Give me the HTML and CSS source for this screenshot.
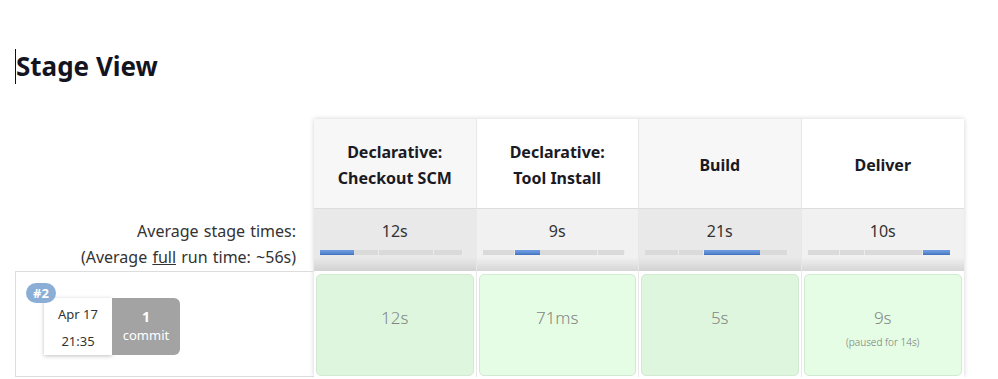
FILE: index.html
```html
<!DOCTYPE html>
<html lang="en">
  <head>
    <meta charset="UTF-8" />
    <meta name="viewport" content="width=device-width, initial-scale=1.0" />
    <title>Stage View</title>
    <link rel="stylesheet" href="styles.css">
  </head>

  <body>
    <h2 class="page-title">Stage View</h2>

    <div class="stage-view">
      <div class="labels">
        <div class="label-head"></div>
        <div class="label-avg">
          Average stage times:<br />
          (Average <u>full</u> run time: ~56s)
        </div>
        <div class="label-build">
          <span class="badge">#2</span>
          <div class="build-info">
            <div class="build-date">
              <span>Apr 17</span>
              <span>21:35</span>
            </div>
            <div class="build-commits">
              <strong>1</strong>
              <span>commit</span>
            </div>
          </div>
        </div>
      </div>

      <div class="stages">
        <!-- header row -->
        <div class="stage-head odd">Declarative:<br />Checkout SCM</div>
        <div class="stage-head">Declarative:<br />Tool Install</div>
        <div class="stage-head odd">Build</div>
        <div class="stage-head last">Deliver</div>

        <!-- average row -->
        <div class="stage-avg odd">
          <div class="avg-time">12s</div>
          <div class="bar">
            <i class="active" style="width: 24%"></i><i style="width: 17%"></i><i style="width: 39%"></i><i style="width: 20%"></i>
          </div>
        </div>
        <div class="stage-avg">
          <div class="avg-time">9s</div>
          <div class="bar">
            <i style="width: 23%"></i><i class="active" style="width: 17.5%"></i><i style="width: 40%"></i><i style="width: 19.5%"></i>
          </div>
        </div>
        <div class="stage-avg odd">
          <div class="avg-time">21s</div>
          <div class="bar">
            <i style="width: 24%"></i><i style="width: 17.5%"></i><i class="active" style="width: 39%"></i><i style="width: 19.5%"></i>
          </div>
        </div>
        <div class="stage-avg last">
          <div class="avg-time">10s</div>
          <div class="bar">
            <i style="width: 23%"></i><i style="width: 17.5%"></i><i style="width: 40%"></i><i class="active" style="width: 19.5%"></i>
          </div>
        </div>

        <!-- build #2 -->
        <div class="stage-cell odd"><div class="success">12s</div></div>
        <div class="stage-cell"><div class="success">71ms</div></div>
        <div class="stage-cell odd"><div class="success">5s</div></div>
        <div class="stage-cell last">
          <div class="success">9s<div class="paused">(paused for 14s)</div></div>
        </div>
      </div>
    </div>
  </body>
</html>
```

FILE: styles.css
```css
body {
  font-family: "Noto Sans", sans-serif;
  margin: 0;
  padding: 0 0 0 15px;
  color: #333;
  background: #fff;
}

.page-title {
  margin: 49px 0 0;
  font-size: 26px;
  line-height: 35px;
  font-weight: bold;
  color: #14141f;
  border-left: 1px solid #111;
}

.stage-view {
  display: flex;
  margin-top: 35px;
}

/* left label column */

.labels {
  width: 299px;
  flex-shrink: 0;
}

.label-head {
  height: 90px;
}

.label-avg {
  height: 62px;
  box-sizing: border-box;
  padding: 9px 18px 0 0;
  text-align: right;
  font-size: 16px;
  line-height: 26px;
  color: #333;
  word-spacing: 1px;
}

.label-build {
  position: relative;
  height: 106px;
  box-sizing: border-box;
  border-top: 1px solid #ddd;
  border-left: 1px solid #ddd;
  border-bottom: 1px solid #ddd;
  padding: 26px 0 0 28px;
}

.badge {
  position: absolute;
  left: 10px;
  top: 11px;
  background-color: #8aaed6;
  color: #fff;
  font-size: 13px;
  font-weight: bold;
  line-height: 20px;
  padding: 0 7px;
  border-radius: 10px;
  z-index: 1;
}

.build-info {
  display: flex;
  height: 57px;
}

.build-date {
  width: 68px;
  background: #fff;
  box-shadow: 0 1px 4px rgba(0, 0, 0, 0.25);
  display: flex;
  flex-direction: column;
  justify-content: space-around;
  align-items: center;
  font-size: 13px;
  color: #333;
  padding: 2px 0 0;
  box-sizing: border-box;
}

.build-commits {
  width: 68px;
  background: #a3a3a3;
  color: #fff;
  border-radius: 0 6px 6px 0;
  display: flex;
  flex-direction: column;
  align-items: center;
  justify-content: center;
  font-size: 13px;
  line-height: 19px;
  padding-bottom: 2px;
  box-sizing: border-box;
}

.build-commits strong {
  font-size: 14px;
}

/* stage columns */

.stages {
  width: 650px;
  display: grid;
  grid-template-columns: repeat(4, 1fr);
  grid-template-rows: 90px 62px 106px;
  box-shadow: 0 0 5px rgba(0, 0, 0, 0.18);
}

.stage-head,
.stage-avg,
.stage-cell {
  border-right: 1px solid #e8e8e8;
}

.last {
  border-right: none;
}

.stage-head {
  display: flex;
  align-items: center;
  justify-content: center;
  text-align: center;
  font-size: 16px;
  font-weight: bold;
  line-height: 26px;
  color: #1a1a24;
  background: #fff;
  border-bottom: 1px solid #ddd;
  padding-top: 2px;
}

.stage-head.odd {
  background: #f7f7f7;
}

.stage-avg {
  background: linear-gradient(to bottom, #f1f1f1 0, #f1f1f1 78%, #d6d6d6 100%);
  padding-top: 9px;
  box-sizing: border-box;
}

.stage-avg.odd {
  background: linear-gradient(to bottom, #e9e9e9 0, #e9e9e9 78%, #d2d2d2 100%);
}

.avg-time {
  text-align: center;
  font-size: 16px;
  line-height: 26px;
  color: #333;
}

.bar {
  display: flex;
  width: 143px;
  height: 5px;
  margin: 6px 0 0 6px;
}

.bar i {
  display: block;
  height: 100%;
  background: #dadada;
  box-shadow: inset -1px 0 0 #ececec;
}

.bar i.active {
  background: linear-gradient(to bottom, #6f9de0 0, #5b8bd4 60%, #3f6fb8 100%);
  box-shadow: none;
}

.stage-cell {
  padding: 3px 2px 1px;
  box-sizing: border-box;
}

.success {
  height: 100%;
  box-sizing: border-box;
  background: #e4fde4;
  border: 1px solid #d2e9d2;
  border-radius: 5px;
  text-align: center;
  padding-top: 31px;
  font-size: 17px;
  font-weight: 300;
  line-height: 24px;
  color: #858585;
}

.odd .success {
  background: #ddf6dd;
}

.paused {
  font-size: 10px;
  line-height: 14px;
  margin-top: 5px;
  color: #777;
}
```
